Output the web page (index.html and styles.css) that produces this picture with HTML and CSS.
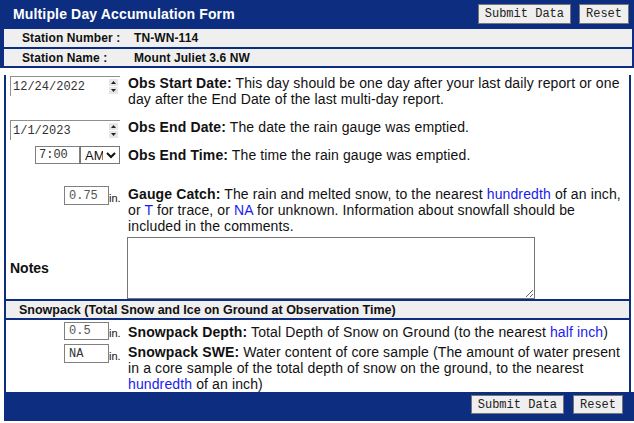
FILE: index.html
```html
<!DOCTYPE html>
<html lang="en">
<head>
    <meta charset="UTF-8">
    <meta name="viewport" content="width=device-width, initial-scale=1.0">
    <title>Multiple Day Accumulation Form</title>
    <link rel="stylesheet" href="styles.css">
</head>
<body>
<form class="acc-form" onsubmit="return false">

    <div class="top">
        <div class="titlebar">
            <h1>Multiple Day Accumulation Form</h1>
            <div class="actions">
                <button type="submit" class="btn">Submit Data</button>
                <button type="reset" class="btn">Reset</button>
            </div>
        </div>
        <div class="station-row">
            <span class="station-label">Station Number :</span>
            <span>TN-WN-114</span>
        </div>
        <div class="station-row">
            <span class="station-label">Station Name :</span>
            <span>Mount Juliet 3.6 NW</span>
        </div>
    </div>

    <div class="panel">
        <!-- dates -->
        <div class="field field-start">
            <div class="ctrl">
                <div class="datebox">
                    <input type="text" class="date-input" value="12/24/2022">
                    <svg class="spin" width="9" height="15" viewBox="0 0 9 15">
                        <rect x="0" y="0" width="9" height="7" fill="#e6e6e6"/>
                        <rect x="0" y="8" width="9" height="7" fill="#e6e6e6"/>
                        <path d="M2 5 L4.5 2 L7 5 Z" fill="#222"/>
                        <path d="M2 10 L4.5 13 L7 10 Z" fill="#222"/>
                    </svg>
                </div>
            </div>
            <p class="desc"><b>Obs Start Date:</b> This day should be one day after your last daily report or one day after the End Date of the last multi-day report.</p>
        </div>

        <div class="field field-end">
            <div class="ctrl">
                <div class="datebox">
                    <input type="text" class="date-input" value="1/1/2023">
                    <svg class="spin" width="9" height="15" viewBox="0 0 9 15">
                        <rect x="0" y="0" width="9" height="7" fill="#e6e6e6"/>
                        <rect x="0" y="8" width="9" height="7" fill="#e6e6e6"/>
                        <path d="M2 5 L4.5 2 L7 5 Z" fill="#222"/>
                        <path d="M2 10 L4.5 13 L7 10 Z" fill="#222"/>
                    </svg>
                </div>
            </div>
            <p class="desc"><b>Obs End Date:</b> The date the rain gauge was emptied.</p>
        </div>

        <div class="field field-time">
            <div class="ctrl">
                <input type="text" class="box-input time-input" value="7:00">
                <select class="ampm">
                    <option>AM</option>
                    <option>PM</option>
                </select>
            </div>
            <p class="desc"><b>Obs End Time:</b> The time the rain gauge was emptied.</p>
        </div>

        <!-- precipitation -->
        <div class="field field-gauge">
            <div class="ctrl">
                <input type="text" class="box-input amount" value="0.75">
                <span class="unit">in.</span>
            </div>
            <p class="desc"><b>Gauge Catch:</b> The rain and melted snow, to the nearest <a href="#">hundredth</a> of an inch, or <a href="#">T</a> for trace, or <a href="#">NA</a> for unknown. Information about snowfall should be included in the comments.</p>
        </div>

        <div class="field field-notes">
            <div class="ctrl notes-label">Notes</div>
            <textarea class="notes"></textarea>
        </div>

        <div class="section-head">Snowpack (Total Snow and Ice on Ground at Observation Time)</div>

        <div class="field field-depth">
            <div class="ctrl">
                <input type="text" class="box-input amount" value="0.5">
                <span class="unit">in.</span>
            </div>
            <p class="desc"><b>Snowpack Depth:</b> Total Depth of Snow on Ground (to the nearest <a href="#">half inch</a>)</p>
        </div>

        <div class="field field-swe">
            <div class="ctrl">
                <input type="text" class="box-input amount dark" value="NA">
                <span class="unit">in.</span>
            </div>
            <p class="desc"><b>Snowpack SWE:</b> Water content of core sample (The amount of water present in a core sample of the total depth of snow on the ground, to the nearest <a href="#">hundredth</a> of an inch)</p>
        </div>
    </div>

    <div class="footer">
        <button type="submit" class="btn">Submit Data</button>
        <button type="reset" class="btn">Reset</button>
    </div>

</form>
</body>
</html>
```

FILE: styles.css
```css
* {
    margin: 0;
    padding: 0;
    box-sizing: border-box;
}

body {
    font-family: "Liberation Sans", Arial, sans-serif;
    font-size: 14px;
    color: #111;
    background: #fff;
    width: 634px;
}

/* Bandeau du haut */
.top {
    background: #0d2e80;
    padding: 0 2px 2px 4px;
    display: flex;
    flex-direction: column;
    gap: 2px;
}

.titlebar {
    height: 27px;
    margin-left: -4px;
    margin-right: -2px;
    padding: 0 5px 0 13px;
    display: flex;
    align-items: center;
    justify-content: space-between;
}

.titlebar h1 {
    color: #fff;
    font-size: 14px;
    font-weight: bold;
    letter-spacing: 0.15px;
}

.actions {
    display: flex;
    gap: 8px;
}

.btn {
    font-family: "Liberation Mono", "Courier New", monospace;
    font-size: 12px;
    color: #222;
    background: #efefef;
    border: 1px solid #767676;
    height: 20px;
    padding: 0 6px;
}

.station-row {
    background: #efefef;
    height: 18px;
    padding-left: 18px;
    display: flex;
    align-items: center;
    font-size: 12px;
    font-weight: bold;
    color: #111;
    letter-spacing: 0.1px;
}

.station-row + .station-row {
    height: 17px;
}

.station-label {
    width: 112px;
}

/* Corps du formulaire */
.panel {
    margin-left: 4px;
    width: 627px;
    border-left: 2px solid #0d2e80;
    border-right: 2px solid #0d2e80;
}

.field {
    display: flex;
    align-items: flex-start;
}

.ctrl {
    width: 114px;
    margin-right: 8px;
    flex-shrink: 0;
    display: flex;
    justify-content: flex-end;
    align-items: flex-start;
}

.desc {
    width: 498px;
    line-height: 16px;
    letter-spacing: 0.12px;
}

.desc b {
    font-weight: bold;
}

.desc a {
    color: #1a1aee;
    text-decoration: none;
}

.field-start { margin-top: 7px; }
.field-end { margin-top: 12px; }
.field-time { margin-top: 6px; align-items: center; }
.field-gauge { margin-top: 22px; }
.field-notes { margin-top: 3px; align-items: center; }
.field-depth { margin-top: 2px; }
.field-depth .desc { padding-top: 2px; }
.field-swe { margin-top: 4px; }

.datebox {
    width: 110px;
    height: 20px;
    margin-top: 1px;
    border-top: 1px solid #8f8f8f;
    border-left: 1px solid #8f8f8f;
    display: flex;
    align-items: center;
    padding-right: 2px;
}

.date-input {
    flex: 1;
    min-width: 0;
    border: none;
    outline: none;
    background: transparent;
    font-family: "Liberation Mono", "Courier New", monospace;
    font-size: 12px;
    color: #333;
    padding-left: 2px;
}

.spin {
    display: block;
}

.box-input {
    border: 1px solid #808080;
    font-family: "Liberation Mono", "Courier New", monospace;
    font-size: 12px;
    color: #555;
    padding: 0 0 0 4px;
    outline: none;
}

.time-input {
    width: 45px;
    height: 18px;
    color: #333;
    padding-left: 3px;
}

.ampm {
    width: 40px;
    height: 18px;
    font-family: "Liberation Sans", Arial, sans-serif;
    font-size: 13px;
    border: 1px solid #767676;
    border-radius: 0;
    background: #fff;
    color: #111;
}

.amount {
    width: 45px;
    height: 19px;
}

.amount.dark {
    color: #333;
}

.field-depth .amount {
    height: 18px;
}

.unit {
    font-size: 11px;
    align-self: flex-end;
    width: 11px;
    line-height: 13px;
}

.notes-label {
    justify-content: flex-start;
    padding-left: 4px;
    font-weight: bold;
}

.notes {
    width: 408px;
    height: 62px;
    margin-left: -1px;
    border: 1px solid #767676;
    resize: both;
    font-family: "Liberation Sans", Arial, sans-serif;
}

.section-head {
    background: #efefef;
    border-top: 2px solid #0d2e80;
    border-bottom: 2px solid #0d2e80;
    height: 21px;
    padding-left: 13px;
    display: flex;
    align-items: center;
    font-size: 12.5px;
    font-weight: bold;
}

/* Bas de page */
.footer {
    margin-left: 4px;
    height: 29px;
    background: #0d2e80;
    display: flex;
    justify-content: flex-end;
    align-items: flex-start;
    gap: 9px;
    padding: 3px 11px 0 0;
}

.footer .btn {
    height: 19px;
}
```
